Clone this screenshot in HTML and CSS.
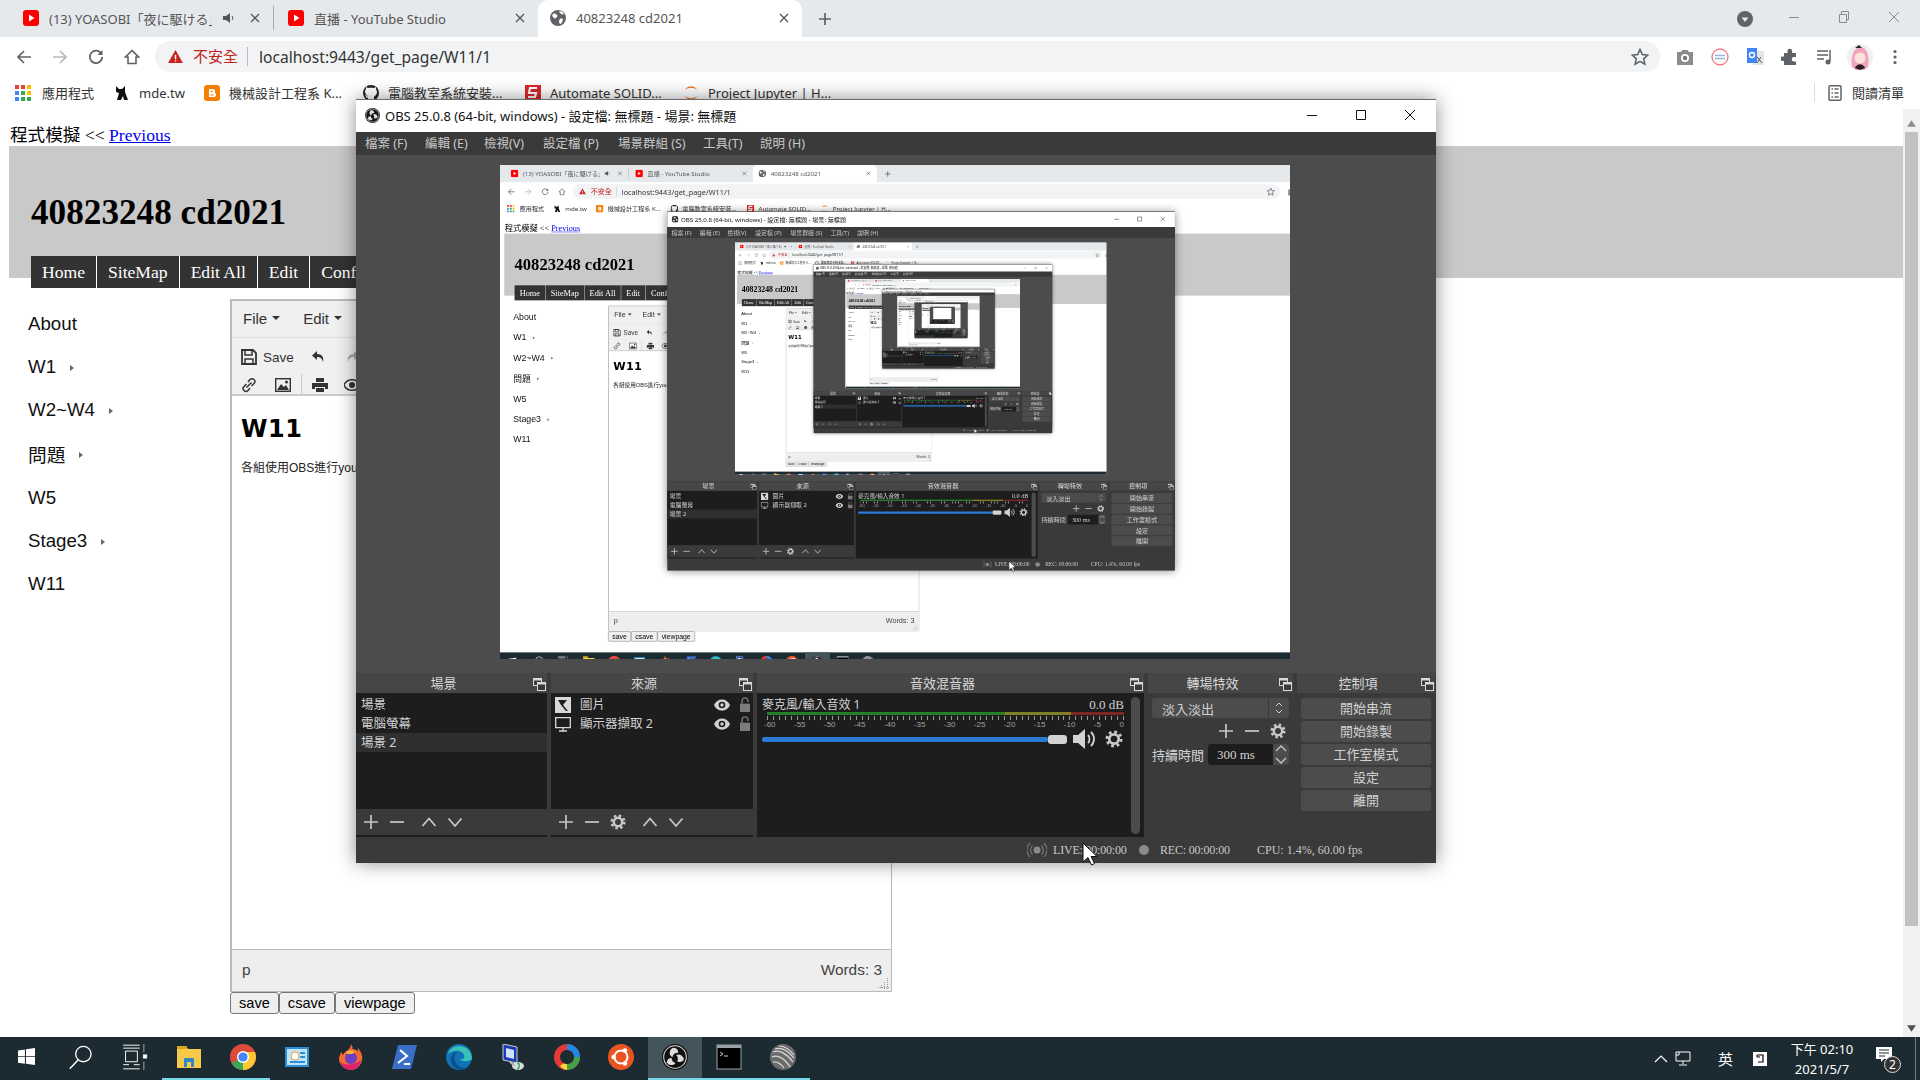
FILE: index.html
```html
<!DOCTYPE html>
<html lang="zh-Hant">
<head>
<meta charset="utf-8">
<title>40823248 cd2021</title>
<link rel="stylesheet" href="styles.css">
</head>
<body>
<svg class="defs" aria-hidden="true">
  <symbol id="i-plus" viewBox="0 0 16 16"><path d="M8 1v14M1 8h14" fill="none" stroke="#c8c8c8" stroke-width="1.7"/></symbol>
  <symbol id="i-minus" viewBox="0 0 16 16"><path d="M1 8h14" fill="none" stroke="#c8c8c8" stroke-width="1.7"/></symbol>
  <symbol id="i-up" viewBox="0 0 16 16"><path d="M1.5 12L8 4.500l6.500 7.500" fill="none" stroke="#c8c8c8" stroke-width="1.8"/></symbol>
  <symbol id="i-down" viewBox="0 0 16 16"><path d="M1.500 4.500L8 12l6.500-7.500" fill="none" stroke="#c8c8c8" stroke-width="1.8"/></symbol>
  <symbol id="i-gear" viewBox="0 0 18 18"><circle cx="9" cy="9" r="4.700" fill="none" stroke="#c8c8c8" stroke-width="2.800"/><circle cx="9" cy="9" r="7" fill="none" stroke="#c8c8c8" stroke-width="3" stroke-dasharray="2.750 2.750"/></symbol>
  <symbol id="i-float" viewBox="0 0 13 13"><rect x="0.500" y="0.500" width="8" height="7" fill="#3a3a3a" stroke="#d8d8d8"/><rect x="0.500" y="0.500" width="8" height="2" fill="#d8d8d8"/><rect x="4.500" y="4.500" width="8" height="8" fill="#3a3a3a" stroke="#d8d8d8"/><rect x="4.500" y="4.500" width="8" height="2" fill="#d8d8d8"/></symbol>
  <symbol id="i-eye" viewBox="0 0 16 12"><path d="M0 6c3-7.500 13-7.500 16 0-3 7.500-13 7.500-16 0z" fill="#d2d2d2"/><circle cx="8" cy="6" r="3.300" fill="#1d1d1d"/><circle cx="8" cy="6" r="1.700" fill="#d2d2d2"/></symbol>
  <symbol id="i-lock" viewBox="0 0 12 18"><rect x="0" y="8" width="12" height="10" fill="#7c7c7c"/><path d="M2.500 8V4.500a3.500 3.500 0 0 1 7 0V6" fill="none" stroke="#7c7c7c" stroke-width="1.600"/></symbol>
  <symbol id="i-yt" viewBox="0 0 16 16"><rect width="16" height="16" rx="3" fill="#f00"/><path d="M6 4.500L11.500 8 6 11.500z" fill="#fff"/></symbol>
  <symbol id="i-close" viewBox="0 0 10 10"><path d="M1 1l8 8M9 1L1 9" fill="none" stroke="#555" stroke-width="1.300"/></symbol>
  <symbol id="i-obs" viewBox="0 0 20 20"><circle cx="10" cy="10" r="10" fill="#111"/><circle cx="10" cy="10" r="8.700" fill="none" stroke="#ddd" stroke-width="0.800"/><path d="M9 2.800a4 4 0 0 0-1 7.400 4 4 0 0 1 4.500-3.500A4 4 0 0 0 9 2.800zM3.600 14a4 4 0 0 0 6.800.600 4 4 0 0 1-3-3.800A4 4 0 0 0 3.600 14zM16.700 12.500a4 4 0 0 0-5.800-4 4 4 0 0 1 .8 4.700 4 4 0 0 0 5-.700z" fill="#ddd"/></symbol>
</svg>

<div class="desktop">
  <header class="tabstrip">
    <div class="tab">
      <svg class="fav"><use href="#i-yt"/></svg>
      <span class="tab-title">(13) YOASOBI「夜に駆ける」</span>
      <svg class="speaker" viewBox="0 0 14 14"><path d="M1 5h3l4-3v10L4 9H1z" fill="#555"/><path d="M10 5c1 1 1 3 0 4" fill="none" stroke="#555"/></svg>
      <svg class="tab-x"><use href="#i-close"/></svg>
    </div>
    <div class="tab tab-sep">
      <svg class="fav"><use href="#i-yt"/></svg>
      <span class="tab-title">直播 - YouTube Studio</span>
      <svg class="tab-x"><use href="#i-close"/></svg>
    </div>
    <div class="tab tab-active">
      <svg class="fav" viewBox="0 0 16 16"><circle cx="8" cy="8" r="8" fill="#5f6368"/><path d="M3 4c2-1 3 0 4 1s0 2-1 3-2 0-3-1-1-2 0-3zM10 9c2-1 3 0 3 1l-2 4c-1 0-2-1-2-2s0-2 1-3zM9 1c2 0 4 1 5 3-1 1-3 0-4-1z" fill="#fff"/></svg>
      <span class="tab-title">40823248 cd2021</span>
      <svg class="tab-x"><use href="#i-close"/></svg>
    </div>
    <svg class="newtab" viewBox="0 0 14 14"><path d="M7 1v12M1 7h12" fill="none" stroke="#5f6368" stroke-width="1.700"/></svg>
    <div class="strip-right">
      <svg class="tabsearch" viewBox="0 0 16 16"><circle cx="8" cy="8" r="8" fill="#5f6368"/><path d="M4.500 6.500h7L8 11z" fill="#e6e9ec"/></svg>
      <svg class="winbtn" viewBox="0 0 12 12"><path d="M1 6.500h10" stroke="#8a8d90" fill="none"/></svg>
      <svg class="winbtn" viewBox="0 0 12 12"><path d="M1.500 3.500h7v8h-7zM3.500 3.500V.5h7v8H8.500" stroke="#8a8d90" fill="none"/></svg>
      <svg class="winbtn" viewBox="0 0 12 12"><path d="M1 1l10 10M11 1L1 11" stroke="#8a8d90" fill="none"/></svg>
    </div>
  </header>

  <div class="toolbar">
    <svg class="tool" viewBox="0 0 16 16"><path d="M15 8H2M8 2L2 8l6 6" fill="none" stroke="#5f6368" stroke-width="1.700"/></svg>
    <svg class="tool" viewBox="0 0 16 16"><path d="M1 8h13M8 2l6 6-6 6" fill="none" stroke="#b5b8bb" stroke-width="1.700"/></svg>
    <svg class="tool" viewBox="0 0 16 16"><path d="M13.500 5A6.200 6.200 0 1 0 14.200 8" fill="none" stroke="#5f6368" stroke-width="1.700"/><path d="M14.500 1v5h-5z" fill="#5f6368"/></svg>
    <svg class="tool" viewBox="0 0 16 16"><path d="M8 1.500L1.500 8H4v6.500h8V8h2.500z" fill="none" stroke="#5f6368" stroke-width="1.600"/></svg>
    <div class="address">
      <svg class="warn" viewBox="0 0 16 14"><path d="M8 0l8 14H0z" fill="#c5221f"/><path d="M7.200 5h1.600v5H7.200zM7.200 11h1.600v1.500H7.200z" fill="#fff"/></svg>
      <span class="insecure">不安全</span>
      <span class="url">localhost:9443/get_page/W11/1</span>
      <svg class="star" viewBox="0 0 18 18"><path d="M9 1.500l2.300 5 5.400.6-4 3.700 1.100 5.400L9 13.400l-4.800 2.800 1.100-5.400-4-3.700 5.400-.6z" fill="none" stroke="#5f6368" stroke-width="1.600"/></svg>
    </div>
    <div class="exts">
      <svg class="ext" viewBox="0 0 18 18"><path d="M1 4h4l1.500-2h5L13 4h4v13H1z" fill="#8b8b8b"/><circle cx="9" cy="10" r="4" fill="#fff"/><circle cx="9" cy="10" r="2.200" fill="#777"/></svg>
      <svg class="ext" viewBox="0 0 18 18"><circle cx="9" cy="9" r="8" fill="#fff" stroke="#ee7a80" stroke-width="1.300"/><path d="M4 7.500h10M4 10.500h10" stroke="#6d9fd6" stroke-width="1.300" stroke-dasharray="1.500 .6"/></svg>
      <svg class="ext" viewBox="0 0 18 18"><rect x="7" y="3" width="11" height="14" fill="#e5e5e5"/><path d="M1 0h10v15H1z" fill="#4285f4"/><circle cx="6" cy="7" r="2.500" fill="none" stroke="#fff" stroke-width="1.400"/><path d="M11 9l5 6M15 9l-4 6" stroke="#555"/></svg>
      <svg class="ext" viewBox="0 0 18 18"><path d="M3 5h3.500V3a2.300 2.300 0 0 1 4.600 0v2H15v4h-2a2.300 2.300 0 0 0 0 4.600h2V17H3v-4H1.500a2.300 2.300 0 0 1 0-4.600H3z" fill="#5f6368"/></svg>
      <svg class="ext" viewBox="0 0 18 18"><path d="M1 3h11M1 7h11M1 11h7" stroke="#5f6368" stroke-width="1.600" fill="none"/><path d="M14 2v11.500" stroke="#5f6368" stroke-width="1.500"/><circle cx="12" cy="14" r="2.500" fill="#5f6368"/></svg>
      <svg class="avatar" viewBox="0 0 26 26"><circle cx="13" cy="13" r="13" fill="#f0f0f0"/><path d="M5 23C3 12 7 4 13 3c7 0 10 9 8 20l-4 3H9z" fill="#f0a5be"/><circle cx="13" cy="14" r="5.500" fill="#fbe3dc"/><path d="M8 24c2-5 8-5 10 0l-5 2z" fill="#2a2026"/><path d="M8 4l4-3 3 3z" fill="#2a2026"/></svg>
      <svg class="ext" viewBox="0 0 18 18"><circle cx="9" cy="3.500" r="1.600" fill="#5f6368"/><circle cx="9" cy="9" r="1.600" fill="#5f6368"/><circle cx="9" cy="14.500" r="1.600" fill="#5f6368"/></svg>
    </div>
  </div>

  <nav class="bookmarks">
    <div class="bm bm-apps"><svg class="bm-i" viewBox="0 0 16 16"><g><rect width="4" height="4" fill="#ea4335"/><rect x="6" width="4" height="4" fill="#ea4335"/><rect x="12" width="4" height="4" fill="#fbbc05"/><rect y="6" width="4" height="4" fill="#4285f4"/><rect x="6" y="6" width="4" height="4" fill="#34a853"/><rect x="12" y="6" width="4" height="4" fill="#fbbc05"/><rect y="12" width="4" height="4" fill="#4285f4"/><rect x="6" y="12" width="4" height="4" fill="#34a853"/><rect x="12" y="12" width="4" height="4" fill="#34a853"/></g></svg>應用程式</div>
    <div class="bm"><svg class="bm-i" viewBox="0 0 16 16"><path d="M2 1l3 3h3l3-3v6l3 8h-4l-1-4-2 4H3L5 8 2 7z" fill="#111"/></svg>mde.tw</div>
    <div class="bm"><svg class="bm-i" viewBox="0 0 16 16"><rect width="16" height="16" rx="3" fill="#f57d00"/><path d="M5 4h4c1.500 0 2 1 2 3v1c1 0 1 1 1 2 0 1.500-1 2-2 2H5z" fill="#fff"/><path d="M6.500 6h2v1h-2zM6.500 9.500h3v1h-3z" fill="#f57d00"/></svg>機械設計工程系 K...</div>
    <div class="bm"><svg class="bm-i" viewBox="0 0 16 16"><circle cx="8" cy="8" r="8" fill="#222"/><path d="M5 16v-3c-2 0-2-2-3-3 2 0 2 2 3 1.500 0-1-3-1.500-3-5 0-1 .5-2 1-2.500V2l2 1c1-.3 5-.3 6 0l2-1v2.500c.5.5 1 1.500 1 2.500 0 3.500-3 4-3 5v4z" fill="#fff"/></svg>電腦教室系統安裝...</div>
    <div class="bm"><svg class="bm-i" viewBox="0 0 16 16"><rect width="16" height="16" fill="#d9272e"/><path d="M12 3H5L4 8h7l-1 4H3" fill="none" stroke="#fff" stroke-width="2.200"/></svg>Automate SOLID...</div>
    <div class="bm"><svg class="bm-i" viewBox="0 0 16 16"><path d="M2 5c2-5 10-5 12 0-3-3-9-3-12 0zM2 11c2 5 10 5 12 0-3 3-9 3-12 0z" fill="#f37726"/></svg>Project Jupyter | H...</div>
    <div class="bm bm-read"><svg class="bm-i" viewBox="0 0 16 16"><rect x="2" y="0.800" width="12" height="14.400" rx="1" fill="none" stroke="#5f6368" stroke-width="1.500"/><path d="M4.500 4h1.500M7.500 4h4M4.500 8h1.500M7.500 8h4M4.500 12h1.500M7.500 12h4" stroke="#5f6368" stroke-width="1.400"/></svg>閱讀清單</div>
  </nav>

  <div class="main">
    <div class="page">
      <div class="crumb">程式模擬 &lt;&lt; <a href="#">Previous</a></div>
      <section class="banner">
        <h1 class="site-title">40823248 cd2021</h1>
        <ul class="site-nav">
          <li>Home</li><li>SiteMap</li><li>Edit All</li><li>Edit</li><li>Config</li>
        </ul>
      </section>
      <div class="content">
        <ul class="side">
          <li>About</li>
          <li>W1<i class="caret"></i></li>
          <li>W2~W4<i class="caret"></i></li>
          <li class="side-cjk">問題<i class="caret"></i></li>
          <li>W5</li>
          <li>Stage3<i class="caret"></i></li>
          <li>W11</li>
        </ul>
        <div class="editor-wrap">
          <div class="editor">
            <div class="ed-menu"><span>File<i class="dd"></i></span><span>Edit<i class="dd"></i></span></div>
            <div class="ed-tools">
              <div class="ed-row">
                <svg class="ed-i" viewBox="0 0 16 16"><path d="M1 1h11l3 3v11H1z" fill="none" stroke="#333" stroke-width="1.800"/><path d="M4 1h7v5H4zM4 10h8v5H4z" fill="none" stroke="#333" stroke-width="1.500"/></svg>
                <span class="ed-save">Save</span>
                <svg class="ed-i ed-undo" viewBox="0 0 16 16"><path d="M6 2L1 6.500 6 11V8c3 0 5 1 6 5 1-5-1-8-6-8z" fill="#333"/></svg>
                <svg class="ed-i ed-redo" viewBox="0 0 16 16"><path d="M10 2l5 4.500L10 11V8c-3 0-5 1-6 5-1-5 1-8 6-8z" fill="#aaa"/></svg>
              </div>
              <div class="ed-row">
                <svg class="ed-i" viewBox="0 0 16 16"><path d="M7 5l2-2.500a2.500 2.500 0 0 1 4 4L10.500 9M9 11l-2 2.500a2.500 2.500 0 0 1-4-4L5.500 7M5.500 10.500l5-5" fill="none" stroke="#333" stroke-width="1.500"/></svg>
                <svg class="ed-i ed-img" viewBox="0 0 16 16"><rect x="0.700" y="1.700" width="14.600" height="12.600" fill="none" stroke="#333" stroke-width="1.400"/><path d="M2 13l4-6 3 3 2-2 3 5z" fill="#333"/><circle cx="11.500" cy="5" r="1.500" fill="#333"/></svg>
                <i class="ed-sep"></i>
                <svg class="ed-i" viewBox="0 0 16 16"><path d="M4 1h8v4H4zM0 6h16v6h-3v-2H3v2H0zM4 11h8v4H4z" fill="#333"/></svg>
                <svg class="ed-i ed-eye" viewBox="0 0 16 12"><path d="M0 6c3-7 13-7 16 0-3 7-13 7-16 0z" fill="none" stroke="#333" stroke-width="1.500"/><circle cx="8" cy="6" r="3" fill="#333"/></svg>
              </div>
            </div>
            <div class="ed-body">
              <h2 class="ed-h">W11</h2>
              <p class="ed-p">各組使用OBS進行youtube直播</p>
            </div>
            <div class="ed-status"><span>p</span><span>Words: 3</span>
              <svg class="grip" viewBox="0 0 11 11"><path d="M9.500 0v11M6.500 4v7M3.500 7v4M0 9.500h11" fill="none" stroke="#999" stroke-dasharray="1 1"/></svg>
            </div>
          </div>
          <div class="ed-btns"><button class="btn">save</button><button class="btn">csave</button><button class="btn">viewpage</button></div>
        </div>
      </div>
    </div>
    <div class="scrollbar">
      <svg class="sb-arrow" viewBox="0 0 10 10"><path d="M1 8h8L5 2z" fill="#8c8c8c"/></svg>
      <div class="sb-track"><div class="sb-thumb"></div></div>
      <svg class="sb-arrow" viewBox="0 0 10 10"><path d="M1 2h8L5 8z" fill="#505050"/></svg>
    </div>
  </div>

  <footer class="taskbar">
    <div class="slot"><svg class="tb-i tb-win" viewBox="0 0 16 16"><path d="M0 2.300l6.500-1v6.400H0zM7.500 1.200L16 0v7.700H7.500zM0 8.500h6.500v6.300L0 13.800zM7.500 8.500H16V16l-8.500-1.200z" fill="#fff"/></svg></div>
    <div class="slot"><svg class="tb-i" viewBox="0 0 22 22"><circle cx="13" cy="8.500" r="6.500" fill="none" stroke="#fff" stroke-width="1.100"/><path d="M8.500 13.500L1.500 21" stroke="#fff" stroke-width="1.200"/></svg></div>
    <div class="slot"><svg class="tb-i" viewBox="0 0 22 22"><path d="M1 1h14M1 21h14M3 6h10v9H3zM1 17.500h5M10 17.500h5M1 3.500h14" fill="none" stroke="#fff" stroke-width=".8"/><path d="M18.500 0v7M18.500 15v7M18 9h3v3h-3z" fill="#fff" stroke="#fff" stroke-width=".5"/></svg></div>
    <div class="slot slot-run"><svg class="tb-i" viewBox="0 0 26 26"><path d="M1 2h9l2 3h13v19H1z" fill="#f7c948"/><path d="M1 2h9l2 3H1z" fill="#d9a520"/><path d="M8 23v-8c0-1 1-1 1-1h8s1 0 1 1v8h-3v-5h-4v5z" fill="#2d88c9"/></svg></div>
    <div class="slot slot-run"><svg class="tb-i" viewBox="0 0 26 26"><circle cx="13" cy="13" r="13" fill="#dd4b39"/><path d="M13 13L1.700 19.500A13 13 0 0 0 13 26 13 13 0 0 0 24.300 19.500z" fill="#3aa757"/><path d="M13 13V26A13 13 0 0 0 25 8H13z" fill="#fcc934"/><circle cx="13" cy="13" r="6" fill="#fff"/><circle cx="13" cy="13" r="4.600" fill="#4285f4"/></svg></div>
    <div class="slot"><svg class="tb-i" viewBox="0 0 26 26"><rect x="1" y="3" width="24" height="20" fill="#2b8fd6"/><rect x="3" y="5" width="20" height="16" fill="#bfe3f7"/><circle cx="11" cy="12" r="4" fill="#fff" stroke="#e8a33d"/><rect x="16" y="8" width="5" height="2" fill="#2b8fd6"/><rect x="16" y="12" width="5" height="2" fill="#2b8fd6"/><rect x="6" y="17" width="15" height="2" fill="#2b8fd6"/></svg></div>
    <div class="slot"><svg class="tb-i" viewBox="0 0 26 26"><path d="M13 0c2 3 2 4 1 5 4 0 5 2 6 2 0-2 0-3-1-4 4 4 6 9 5 13-1 6-6 10-11 10S2 22 1 16C1 12 3 8 4 8c0 1 0 2 1 3 1-3 4-4 5-5s3-3 3-6z" fill="#f26a2e"/><path d="M13 26c-5 0-9-3-11-8 4 3 13 4 21-2-1 6-5 10-10 10z" fill="#e0226e"/><circle cx="13" cy="14" r="6" fill="#6f3cc4"/><path d="M8 8c3-2 7-2 9 0l-3 2H9z" fill="#f7b43c"/></svg></div>
    <div class="slot"><svg class="tb-i" viewBox="0 0 26 26"><path d="M6 1h19l-6 24H0z" fill="#3b6fc7"/><path d="M8 6l7 6-9 7" fill="none" stroke="#fff" stroke-width="2"/><path d="M12 20h6" stroke="#fff" stroke-width="2"/></svg></div>
    <div class="slot"><svg class="tb-i" viewBox="0 0 26 26"><circle cx="13" cy="13" r="13" fill="#1272b6"/><path d="M26 15c0-8-6-13-13-13C7 2 3 6 2 10c3-3 7-4 11-3 4 1 6 4 5 7-1 1-3 2-5 1 3 3 10 3 13 0z" fill="#36c2b4"/><path d="M9 17c-2-4 0-8 3-10-5 1-8 6-7 11 1 4 5 8 11 8 2 0 4-1 5-2-5 1-10-2-12-7z" fill="#0c4f8e"/></svg></div>
    <div class="slot"><svg class="tb-i" viewBox="0 0 26 26"><path d="M3 0l14 3v16L3 16z" fill="#1a3db5" stroke="#ccc"/><path d="M6 4l8 2v9l-8-2z" fill="#cfe4fa"/><ellipse cx="18" cy="22" rx="6" ry="4" fill="#ddd"/><path d="M10 18l5 4" stroke="#bbb" stroke-width="2"/><path d="M17 19c3 0 3 5 0 6" fill="none" stroke="#3aa757" stroke-width="1.500"/></svg></div>
    <div class="slot"><svg class="tb-i" viewBox="0 0 26 26"><circle cx="13" cy="13" r="13" fill="#e53935"/><path d="M13 0a13 13 0 0 1 13 13h-6a7 7 0 0 0-7-7z" fill="#1e88e5"/><path d="M26 13a13 13 0 0 1-13 13v-6a7 7 0 0 0 7-7z" fill="#43a047"/><path d="M13 26A10 10 0 0 1 6 22l4-3a5 5 0 0 0 3 1z" fill="#fdd835"/><circle cx="13" cy="13" r="7" fill="#1b2b31"/></svg></div>
    <div class="slot"><svg class="tb-i" viewBox="0 0 26 26"><circle cx="13" cy="13" r="13" fill="#e95420"/><circle cx="13" cy="13" r="6.500" fill="none" stroke="#fff" stroke-width="2"/><circle cx="5.500" cy="13" r="2.200" fill="#fff"/><circle cx="17" cy="6.500" r="2.200" fill="#fff"/><circle cx="17" cy="19.500" r="2.200" fill="#fff"/></svg></div>
    <div class="slot slot-run slot-on"><svg class="tb-i"><use href="#i-obs"/></svg></div>
    <div class="slot slot-run"><svg class="tb-i" viewBox="0 0 26 26"><rect x="1" y="1" width="24" height="24" fill="#000" stroke="#9aa0a6"/><rect x="1" y="1" width="24" height="3" fill="#9aa0a6"/><path d="M4 8l3 2-3 2M8 12h4" stroke="#ccc" fill="none"/></svg></div>
    <div class="slot slot-run"><svg class="tb-i" viewBox="0 0 26 26"><circle cx="13" cy="13" r="13" fill="#6b6b6b"/><path d="M3 8c6-3 14 2 20 10M2 13c6-3 13 2 18 10M5 5c6-2 13 2 19 9M3 18c4-1 8 2 11 6M9 2c5 0 11 4 15 9" fill="none" stroke="#d8d8d8" stroke-width="1.200"/></svg></div>
    <div class="tray">
      <svg class="tr-chev" viewBox="0 0 14 8"><path d="M1 7l6-6 6 6" fill="none" stroke="#fff" stroke-width="1.200"/></svg>
      <svg class="tr-net" viewBox="0 0 16 16"><path d="M4 1h11v9H1V1h3M1 4h3v-3M8 10v3M4 14h8" fill="none" stroke="#fff"/></svg>
      <span class="tr-ime">英</span>
      <span class="tr-box"><svg viewBox="0 0 10 10"><path d="M2 1h6v7H3" fill="none" stroke="#000" stroke-width="1.200"/><path d="M2 1v2h3" fill="none" stroke="#000"/></svg></span>
      <div class="clock"><div>下午 02:10</div><div>2021/5/7</div></div>
      <div class="notif">
        <svg viewBox="0 0 16 16"><path d="M0 0h16v12H8l-3 3v-3H0z" fill="#fff"/><path d="M3 3h10M3 6h10M3 9h6" stroke="#1b2b31"/></svg>
        <span class="badge">2</span>
      </div>
      <i class="tr-edge"></i>
    </div>
  </footer>

  <div class="obs">
    <div class="obs-title">
      <svg class="obs-logo"><use href="#i-obs"/></svg>
      <span class="obs-title-t">OBS 25.0.8 (64-bit, windows) - 設定檔: 無標題 - 場景: 無標題</span>
      <div class="obs-ctl">
        <svg viewBox="0 0 12 12"><path d="M1 6.500h10" stroke="#111" fill="none"/></svg>
        <svg viewBox="0 0 12 12"><path d="M1.500 1.500h9v9h-9z" stroke="#111" fill="none"/></svg>
        <svg viewBox="0 0 12 12"><path d="M1 1l10 10M11 1L1 11" stroke="#111" fill="none"/></svg>
      </div>
    </div>
    <div class="obs-menu"><span>檔案 (F)</span><span>編輯 (E)</span><span>檢視(V)</span><span>設定檔 (P)</span><span>場景群組 (S)</span><span>工具(T)</span><span>說明 (H)</span></div>
    <div class="obs-stage"><div class="preview"></div></div>
    <div class="docks">
      <section class="dock">
        <div class="dock-h"><span>場景</span><svg class="float"><use href="#i-float"/></svg></div>
        <div class="dock-list">
          <div class="row">場景</div>
          <div class="row">電腦螢幕</div>
          <div class="row row-sel">場景 2</div>
        </div>
        <div class="dock-foot">
          <svg class="f-i"><use href="#i-plus"/></svg><svg class="f-i"><use href="#i-minus"/></svg>
          <svg class="f-i f-gap"><use href="#i-up"/></svg><svg class="f-i"><use href="#i-down"/></svg>
        </div>
      </section>
      <section class="dock">
        <div class="dock-h"><span>來源</span><svg class="float"><use href="#i-float"/></svg></div>
        <div class="dock-list">
          <div class="row row-src"><svg class="src-i" viewBox="0 0 16 16"><rect width="16" height="16" fill="#d8d8d8"/><path d="M3 3h9L8 8l5 6H11L6 8z" fill="#1d1d1d"/></svg><span class="src-n">圖片</span><svg class="eye"><use href="#i-eye"/></svg><svg class="lock"><use href="#i-lock"/></svg></div>
          <div class="row row-src"><svg class="src-i" viewBox="0 0 16 16"><path d="M.7 1.700h14.600v10H.7zM8 12v3M4 15h8" fill="none" stroke="#d8d8d8" stroke-width="1.300"/></svg><span class="src-n">顯示器擷取 2</span><svg class="eye"><use href="#i-eye"/></svg><svg class="lock"><use href="#i-lock"/></svg></div>
        </div>
        <div class="dock-foot">
          <svg class="f-i"><use href="#i-plus"/></svg><svg class="f-i"><use href="#i-minus"/></svg><svg class="f-i"><use href="#i-gear"/></svg>
          <svg class="f-i f-gap"><use href="#i-up"/></svg><svg class="f-i"><use href="#i-down"/></svg>
        </div>
      </section>
      <section class="dock">
        <div class="dock-h"><span>音效混音器</span><svg class="float"><use href="#i-float"/></svg></div>
        <div class="mixer">
          <div class="mix-main">
            <div class="mix-top"><span>麥克風/輸入音效 1</span><span class="mix-db">0.0 dB</span></div>
            <div class="meter"><i class="m-g"></i><i class="m-y"></i><i class="m-r"></i></div>
            <div class="ticks"></div>
            <div class="scale"><span>-60</span><span>-55</span><span>-50</span><span>-45</span><span>-40</span><span>-35</span><span>-30</span><span>-25</span><span>-20</span><span>-15</span><span>-10</span><span>-5</span><span>0</span></div>
            <div class="fader">
              <div class="f-track"></div><div class="f-handle"></div>
              <svg class="f-spk" viewBox="0 0 24 20"><path d="M0 6h5l7-6v20l-7-6H0z" fill="#d2d2d2"/><path d="M15 6c2 2 2 6 0 8M18 3c4 4 4 10 0 14" fill="none" stroke="#d2d2d2" stroke-width="1.800"/></svg>
              <svg class="f-gear"><use href="#i-gear"/></svg>
            </div>
          </div>
          <div class="mix-sb"></div>
        </div>
      </section>
      <section class="dock">
        <div class="dock-h"><span>轉場特效</span><svg class="float"><use href="#i-float"/></svg></div>
        <div class="trans">
          <div class="combo"><span class="combo-t">淡入淡出</span><span class="combo-a"><svg viewBox="0 0 10 14"><path d="M2 5l3-3 3 3M2 9l3 3 3-3" fill="none" stroke="#c8c8c8"/></svg></span></div>
          <div class="trans-btns"><svg class="t-i"><use href="#i-plus"/></svg><svg class="t-i"><use href="#i-minus"/></svg><svg class="t-i"><use href="#i-gear"/></svg></div>
          <div class="dur"><span>持續時間</span><div class="spin"><span class="spin-t">300 ms</span><span class="spin-a"><svg viewBox="0 0 16 10"><path d="M3 7l5-5 5 5" fill="none" stroke="#c8c8c8" stroke-width="1.300"/></svg><svg viewBox="0 0 16 10"><path d="M3 3l5 5 5-5" fill="none" stroke="#c8c8c8" stroke-width="1.300"/></svg></span></div></div>
        </div>
      </section>
      <section class="dock">
        <div class="dock-h"><span>控制項</span><svg class="float"><use href="#i-float"/></svg></div>
        <div class="ctrls"><div class="cbtn">開始串流</div><div class="cbtn">開始錄製</div><div class="cbtn">工作室模式</div><div class="cbtn">設定</div><div class="cbtn">離開</div></div>
      </section>
    </div>
    <div class="obs-status">
      <svg class="sig" viewBox="0 0 20 14"><circle cx="10" cy="7" r="3.500" fill="#8a8a8a"/><path d="M5.500 2.500c-2.500 2.500-2.500 6.500 0 9M14.500 2.500c2.500 2.500 2.500 6.500 0 9M3 0c-4 4-4 10 0 14M17 0c4 4 4 10 0 14" fill="none" stroke="#777" stroke-width="1.200"/></svg>
      <span class="st-live">LIVE: 00:00:00</span>
      <i class="st-dot"></i>
      <span class="st-rec">REC: 00:00:00</span>
      <span class="st-cpu">CPU: 1.4%, 60.00 fps</span>
    </div>
  </div>

  <svg class="cursor" viewBox="0 0 15 24"><path d="M1 1v19l5-4.500 3.500 7.500 3-1.500-3.500-7H15z" fill="#fff" stroke="#111"/></svg>
</div>
<script src="script.js"></script>
</body>
</html>
```
FILE: styles.css
```css
* { box-sizing: border-box; }
html, body { margin: 0; padding: 0; background: #fff; overflow: hidden; }
.defs { position: absolute; width: 0; height: 0; }
ul { list-style: none; margin: 0; padding: 0; }
i { display: block; }
svg { display: block; flex: none; }

.desktop {
  position: relative; width: 1920px; height: 1080px; overflow: hidden;
  display: flex; flex-direction: column; background: #fff;
  font-family: "Liberation Serif", "Noto Sans CJK TC", serif; color: #000;
}
.preview .desktop { transform: scale(.47); transform-origin: 0 0; filter: blur(.35px); }
.preview .preview .desktop { filter: none; }

/* tabs */
.tabstrip { height: 37px; flex: none; display: flex; align-items: stretch; padding-left: 10px; background: #e6e9ec; font-family: "Noto Sans", "Noto Sans CJK TC", sans-serif; font-size: 13px; color: #555; }
.tab { width: 264px; display: flex; align-items: center; padding: 0 13px; gap: 10px; border-right: 1px solid #a9adb1; margin: 6px 0 7px; }
.tab-sep { border-right: 0; padding-left: 14px; }
.tab-active { background: #fff; border: 0; margin: 0; border-radius: 10px 10px 0 0; padding: 0 13px 1px 12px; }
.fav { width: 16px; height: 16px; }
.tab-title { flex: 1; min-width: 0; overflow: hidden; white-space: nowrap; }
.speaker { width: 14px; height: 14px; margin-right: 4px; }
.tab-x { width: 10px; height: 10px; }
.newtab { width: 14px; height: 14px; align-self: center; margin-left: 16px; }
.strip-right { margin-left: auto; display: flex; align-items: center; padding-right: 20px; margin-top: -4px; }
.tabsearch { width: 16px; height: 16px; margin-right: 35px; margin-top: 4px; }
.winbtn { width: 12px; height: 12px; margin-left: 38px; }
.tabsearch + .winbtn { margin-left: 0; }

/* toolbar */
.toolbar { height: 39px; flex: none; display: flex; align-items: center; padding: 0 8px 0 6px; background: #fff; font-family: "Noto Sans", "Noto Sans CJK TC", sans-serif; }
.tool { width: 16px; height: 16px; margin: 0 10px; }
.address { flex: 1; height: 31px; margin: 0 7px 0 5px; background: #f1f3f4; border-radius: 16px; display: flex; align-items: center; padding: 0 11px 0 13px; }
.warn { width: 15px; height: 13px; }
.insecure { margin-left: 10px; color: #c5221f; font-size: 15px; padding-right: 9px; border-right: 1px solid #b8babd; line-height: 19px; }
.url { margin-left: 11px; font-size: 15.600px; color: #333; flex: 1; }
.star { width: 18px; height: 18px; }
.exts { display: flex; align-items: center; width: 245px; }
.ext { width: 18px; height: 18px; margin: 0 8.500px; }
.avatar { width: 26px; height: 26px; margin: 0 4.500px; }

/* bookmarks */
.bookmarks { height: 33px; flex: none; display: grid; grid-template-columns: 99px 90px 159px 162px 158px 1fr auto; align-items: center; padding: 0 16px 0 15px; font-family: "Noto Sans", "Noto Sans CJK TC", sans-serif; font-size: 13px; color: #333; background: #fff; }
.bm { display: flex; align-items: center; gap: 9px; white-space: nowrap; }
.bm-apps { gap: 11px; }
.bm-i { width: 16px; height: 16px; }
.bm-read { border-left: 1px solid #ddd; padding-left: 12px; }

/* page */
.main { flex: 1; min-height: 0; display: flex; }
.page { flex: 1; min-width: 0; padding: 15px 0 0 0; overflow: hidden; }
.crumb { font-size: 17.600px; line-height: 22px; padding-left: 10px; }
.crumb a { color: #00e; }
.banner { height: 132px; margin-left: 9px; background: #c9c9c9; padding: 46px 0 0 22px; }
.site-title { font-size: 35.200px; line-height: 41px; margin: 0 0 23px; font-weight: 700; }
.site-nav { display: flex; height: 32px; }
.site-nav li { display: flex; align-items: center; padding: 0 11px; background: #333; color: #fff; font-size: 17.600px; border-right: 1px solid #fff; white-space: nowrap; }
.content { display: flex; margin-top: 21px; }
.side { width: 230px; flex: none; padding: 3px 0 0 28px; font-family: "Liberation Sans", "Noto Sans CJK TC", sans-serif; font-size: 18.700px; color: #111; }
.side li { height: 43px; display: flex; align-items: center; }
.side-cjk { margin: 1px 0; }
.caret { width: 0; height: 0; margin: 3px 0 0 14px; border-left: 4px solid #666; border-top: 3.500px solid transparent; border-bottom: 3.500px solid transparent; }

.editor-wrap { width: 662px; font-family: "Liberation Sans", "Noto Sans CJK TC", sans-serif; }
.editor { height: 693px; border: 1px solid #bbb; border-width: 2px 1px 1px 2px; display: flex; flex-direction: column; background: #fff; }
.ed-menu { height: 37px; flex: none; background: #f0f0f0; border-bottom: 1px solid #ddd; display: flex; align-items: center; gap: 23px; padding: 0 0 2px 11px; font-size: 15px; color: #333; }
.ed-menu span { display: flex; align-items: center; }
.dd { width: 0; height: 0; margin-left: 5px; border-top: 4px solid #333; border-left: 4px solid transparent; border-right: 4px solid transparent; }
.ed-tools { height: 58px; flex: none; background: #f0f0f0; border-bottom: 2px solid #ccc; padding: 6px 0 0 9px; }
.ed-row { height: 26px; display: flex; align-items: center; }
.ed-row + .ed-row { margin-top: 2px; }
.ed-i { width: 16px; height: 16px; }
.ed-save { font-size: 13.500px; margin: 0 0 0 6px; color: #333; }
.ed-undo { margin-left: 17px; }
.ed-redo { margin-left: 17px; }
.ed-img { margin-left: 18px; }
.ed-sep { width: 1px; height: 22px; background: #ccc; margin: 0 10px 0 10px; }
.ed-eye { margin-left: 16px; }
.ed-body { flex: 1; padding: 16px 0 0 9px; }
.ed-h { margin: 0; font-family: "DejaVu Sans", sans-serif; font-weight: 700; font-size: 24px; line-height: 34px; letter-spacing: .5px; }
.ed-p { margin: 13px 0 0; font-size: 12px; line-height: 18px; white-space: nowrap; color: #222; }
.ed-status { position: relative; height: 42px; flex: none; background: #eee; border-top: 1px solid #bbb; display: flex; justify-content: space-between; align-items: center; padding: 0 9px 2px 10px; font-size: 15.400px; color: #444; }
.grip { position: absolute; right: 2px; bottom: 2px; width: 11px; height: 11px; }
.ed-btns { display: flex; }
.btn { height: 22px; padding: 0 8px; margin: 0; border: 1px solid #767676; border-radius: 3px; background: #efefef; font-family: "Liberation Sans", sans-serif; font-size: 14.600px; color: #000; }

.scrollbar { width: 17px; flex: none; background: #f1f1f1; display: flex; flex-direction: column; }
.sb-arrow { width: 17px; height: 17px; padding: 3px; margin-top: 6px; }
.sb-arrow:last-child { margin: 0; }
.sb-track { flex: 1; padding: 0 2px; }
.sb-thumb { height: 794px; background: #c1c1c1; }

/* taskbar */
.taskbar { height: 43px; flex: none; display: flex; background: #1b2b31; color: #fff; font-family: "Noto Sans", "Noto Sans CJK TC", sans-serif; }
.slot { width: 54px; height: 43px; display: flex; align-items: center; justify-content: center; padding-bottom: 2px; border-bottom: 2px solid transparent; }
.slot-run { border-bottom-color: #76d8e8; background-clip: padding-box; }
.slot-on { background-color: #43545a; }
.tb-i { width: 26px; height: 26px; }
.tb-win { width: 17px; height: 17px; margin-right: 2px; }
.tray { margin-left: auto; display: flex; align-items: center; }
.tr-chev { width: 14px; height: 8px; margin-right: 7px; }
.tr-net { width: 16px; height: 16px; margin-right: 27px; }
.tr-ime { font-size: 15px; width: 20px; margin-right: 15px; font-family: "Noto Sans CJK TC", sans-serif; }
.tr-box { width: 14px; height: 14px; background: #fff; display: flex; align-items: center; justify-content: center; margin-right: 11px; }
.tr-box svg { width: 10px; height: 10px; }
.clock { width: 88px; text-align: center; font-size: 13px; line-height: 20px; margin-right: 4px; }
.notif { position: relative; width: 36px; height: 43px; }
.notif svg { position: absolute; left: 6px; top: 10px; width: 16px; height: 16px; }
.badge { position: absolute; left: 14px; top: 19px; width: 17px; height: 17px; border-radius: 50%; background: #333; border: 1px solid #ddd; font-size: 12px; line-height: 15px; text-align: center; }
.tr-edge { width: 1px; height: 43px; background: #6f7c80; margin: 0 4px 0 9px; }

/* OBS */
.obs { position: absolute; left: 356px; top: 99px; width: 1080px; height: 764px; display: flex; flex-direction: column; background: #3a3a3a; border-top: 1px solid #6b6b6b; box-shadow: 0 0 18px rgba(0,0,0,.45); font-family: "Noto Sans", "Noto Sans CJK TC", sans-serif; color: #d2d2d2; }
.obs-title { height: 32px; flex: none; background: #fff; color: #111; display: flex; align-items: center; padding: 0 20px 2px 9px; font-size: 13px; }
.obs-logo { width: 15px; height: 15px; margin-right: 5px; }
.obs-title-t { flex: 1; white-space: nowrap; }
.obs-ctl { display: flex; gap: 37px; }
.obs-ctl svg { width: 12px; height: 12px; }
.obs-menu { height: 23px; flex: none; background: #3a3a3a; display: grid; grid-template-columns: 60px 59px 59px 75px 85px 57px auto; align-items: center; padding: 0 0 2px 9px; font-size: 12.500px; color: #c8c8c8; white-space: nowrap; }
.obs-stage { flex: 1; min-height: 0; background: #4c4c4c; padding: 10px 0 0 144px; }
.preview { width: 790px; height: 494px; background: #fff; overflow: hidden; }
.docks { height: 164px; flex: none; display: grid; grid-template-columns: 191px 202px 387px 145px 138px; gap: 4px; background: #3a3a3a; }
.dock { display: flex; flex-direction: column; min-width: 0; }
.dock-h { height: 20px; flex: none; background: #464646; display: flex; align-items: center; justify-content: center; position: relative; font-size: 13px; color: #d8d8d8; padding: 0 16px 2px 0; }
.float { position: absolute; right: 1px; top: 5px; width: 13px; height: 13px; }
.dock-list { flex: 1; background: #1d1d1d; padding: 2px 0 0; font-size: 12.500px; }
.row { height: 19px; line-height: 19px; padding-left: 5px; white-space: nowrap; }
.row-sel { background: #2f2f2f; }
.row-src { display: flex; align-items: center; padding: 0 2px 0 4px; }
.src-i { width: 16px; height: 16px; margin-right: 9px; }
.src-n { flex: 1; }
.eye { width: 16px; height: 12px; margin-right: 9px; }
.lock { width: 12px; height: 15px; }
.dock-foot { height: 28px; flex: none; background: #3a3a3a; border-bottom: 2px solid #1d1d1d; display: flex; align-items: center; padding-left: 7px; gap: 10px; }
.f-i { width: 16px; height: 16px; }
.f-gap { margin-left: 6px; }
.mixer { flex: 1; background: #1d1d1d; display: flex; min-height: 0; }
.mix-main { flex: 1; min-width: 0; padding: 3px 0 0 5px; font-size: 12px; }
.mix-top { display: flex; justify-content: space-between; height: 16px; line-height: 17px; }
.mix-db { font-family: "Liberation Serif", serif; font-size: 13px; }
.meter { display: flex; height: 3px; margin-left: 5px; }
.m-g { width: 238px; background: #267f26; }
.m-y { width: 66px; background: #7f7f26; }
.m-r { width: 53px; background: #7f2626; }
.ticks { height: 4px; margin-left: 5px; margin-top: 1px; background: repeating-linear-gradient(90deg, #9a9a9a 0 1px, transparent 1px 5.930px); }
.scale { display: flex; justify-content: space-between; margin-left: 2px; font-size: 8px; line-height: 9px; color: #a0a0a0; font-family: "Liberation Sans", sans-serif; }
.fader { display: flex; align-items: center; height: 22px; margin-top: -1px; }
.f-track { width: 286px; height: 5px; background: #2a7bd6; border-radius: 2px; }
.f-handle { width: 19px; height: 9px; background: #d2d2d2; border-radius: 3px; }
.f-spk { width: 24px; height: 20px; margin-left: 6px; }
.f-gear { width: 18px; height: 18px; margin-left: 8px; }
.mix-sb { width: 9px; flex: none; margin: 4px 4px 3px 7px; background: #4c4c4c; border-radius: 5px; }
.trans { flex: 1; padding: 5px 4px 0; font-size: 13px; }
.combo { height: 20px; background: #4c4c4c; border-radius: 3px; display: flex; align-items: center; }
.combo-t { flex: 1; padding-left: 10px; }
.combo-a { width: 21px; height: 20px; border-left: 1px solid #3a3a3a; display: flex; align-items: center; justify-content: center; }
.combo-a svg { width: 10px; height: 14px; }
.trans-btns { display: flex; justify-content: flex-end; gap: 10px; height: 26px; align-items: center; padding-right: 3px; }
.t-i { width: 16px; height: 16px; }
.dur { display: flex; align-items: center; justify-content: space-between; height: 21px; }
.spin { width: 81px; height: 21px; display: flex; background: #1d1d1d; border-radius: 3px; align-items: center; }
.spin-t { flex: 1; padding-left: 9px; font-family: "Liberation Serif", serif; }
.spin-a { width: 16px; height: 21px; background: #4c4c4c; display: flex; flex-direction: column; gap: 1px; border-radius: 0 3px 3px 0; }
.spin-a svg { width: 16px; height: 10px; }
.ctrls { flex: 1; padding: 5px 4px 0; display: flex; flex-direction: column; gap: 2px; }
.cbtn { height: 21px; background: #4c4c4c; border-radius: 3px; text-align: center; line-height: 20px; font-size: 13px; }
.obs-status { height: 26px; flex: none; display: flex; align-items: center; font-family: "Liberation Serif", serif; font-size: 12px; color: #c8c8c8; padding-left: 671px; }
.sig { width: 20px; height: 14px; margin-right: 6px; }
.st-live { width: 86px; white-space: nowrap; letter-spacing: -.2px; }
.st-dot { width: 10px; height: 10px; border-radius: 50%; background: #8a8a8a; margin-right: 11px; }
.st-rec { width: 97px; white-space: nowrap; letter-spacing: -.2px; }
.st-cpu { white-space: nowrap; }
.cursor { position: absolute; left: 1082px; top: 842px; width: 15px; height: 24px; }
```
FILE: script.js
```js
// The OBS preview captures the screen it is shown on: each level holds a copy of the desktop.
var LEVELS = 5;
var root = document.querySelector('.desktop');
var pristine = root.cloneNode(true);
var host = root.querySelector('.preview');
for (var i = 0; i < LEVELS; i++) {
  var copy = pristine.cloneNode(true);
  copy.setAttribute('aria-hidden', 'true');
  host.appendChild(copy);
  host = copy.querySelector('.preview');
}
```
